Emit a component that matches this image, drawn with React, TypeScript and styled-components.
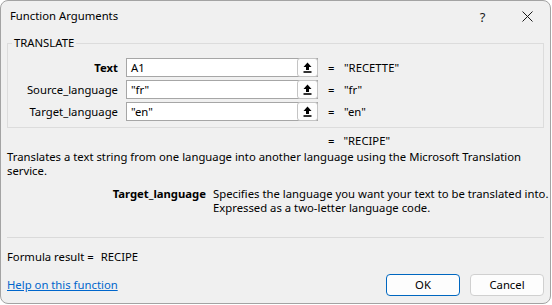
import React from "react";
import styled, { createGlobalStyle } from "styled-components";

const Global = createGlobalStyle`
  html, body { margin: 0; padding: 0; background: #ffffff; }
  body { font-family: "Noto Sans", "Segoe UI", sans-serif; font-size: 11.3px; color: #000; }
  * { box-sizing: border-box; }
`;

const Window = styled.div`
  width: 551px;
  height: 304px;
  background: #f0f0f0;
  border: 1px solid #a3a3a3;
  border-radius: 8px;
  display: flex;
  flex-direction: column;
  overflow: hidden;
`;

const TitleBar = styled.div`
  height: 31px;
  flex: none;
  display: flex;
  align-items: center;
  padding-left: 9px;
`;

const Title = styled.div`
  flex: 1;
  line-height: 16px;
  margin-top: -1px;
`;

const CaptionButton = styled.div`
  width: 45px;
  height: 31px;
  display: flex;
  align-items: center;
  justify-content: center;
  font-size: 13px;
  color: #1a1a1a;
`;

const Body = styled.div`
  flex: 1;
  display: flex;
  flex-direction: column;
  padding: 0 6px;
`;

const GroupBox = styled.fieldset`
  margin: 3px 0 0 0;
  padding: 7px 0 6px 0;
  border: 1px solid #dcdcdc;
  border-radius: 0;
  min-width: 0;
`;

const Legend = styled.legend`
  margin-left: 4px;
  padding: 0 2px;
  line-height: 16px;
`;

const ArgGrid = styled.div`
  display: grid;
  grid-template-columns: 110px 192px 10px 1fr;
  column-gap: 8px;
  row-gap: 3px;
  align-items: center;
`;

const ArgLabel = styled.div<{ $bold?: boolean }>`
  text-align: right;
  font-weight: ${(p) => (p.$bold ? 700 : 400)};
  line-height: 16px;
  white-space: nowrap;
`;

const Field = styled.div`
  height: 19px;
  background: #ffffff;
  border: 1px solid #a6a6a6;
  display: flex;
  align-items: center;
`;

const FieldText = styled.div`
  flex: 1;
  padding-left: 4px;
  line-height: 16px;
  white-space: nowrap;
  overflow: hidden;
`;

const RefButton = styled.div`
  width: 21px;
  height: 19px;
  margin: -1px -1px -1px 0;
  border: 1px solid #c4c4c4;
  border-radius: 3px;
  background: #fdfdfd;
  display: flex;
  align-items: center;
  justify-content: center;
`;

const Eq = styled.div`
  line-height: 16px;
  padding-left: 2px;
`;

const Value = styled.div`
  line-height: 16px;
  white-space: nowrap;
`;

const ResultRow = styled.div`
  margin-top: 5px;
  padding-left: 321px;
  display: flex;
  gap: 9px;
  line-height: 16px;
`;

const Description = styled.div`
  margin-top: 1px;
  line-height: 14px;
  white-space: nowrap;
`;

const ArgHelp = styled.div`
  margin-top: 9px;
  display: grid;
  grid-template-columns: 199px 1fr;
  column-gap: 7px;
  line-height: 14px;
  white-space: nowrap;
`;

const ArgHelpName = styled.div`
  text-align: right;
  font-weight: 700;
`;

const Separator = styled.div`
  margin-top: 22px;
  height: 1px;
  background: #dadada;
`;

const FormulaResult = styled.div`
  margin-top: 11px;
  line-height: 16px;
  display: flex;
  gap: 7px;
`;

const Footer = styled.div`
  margin-top: 9px;
  display: flex;
  align-items: center;
  gap: 10px;
`;

const HelpLink = styled.a`
  flex: 1;
  color: #0066cc;
  text-decoration: underline;
  line-height: 16px;
`;

const DialogButton = styled.div<{ $default?: boolean }>`
  width: 74px;
  height: 22px;
  border: 1px solid ${(p) => (p.$default ? "#0067c0" : "#d0d0d0")};
  border-radius: 4px;
  background: #fdfdfd;
  display: flex;
  align-items: center;
  justify-content: center;
  line-height: 16px;
`;

const RefIcon = () => (
  <svg width="9" height="11" viewBox="0 0 9 11">
    <path d="M4.5 0.5 L8.5 5 H6 V8 H3 V5 H0.5 Z" fill="#000" />
    <rect x="0.5" y="9.2" width="8" height="1.6" fill="#000" />
  </svg>
);

const CloseIcon = () => (
  <svg width="11" height="11" viewBox="0 0 11 11">
    <path d="M0.5 0.5 L10.5 10.5 M10.5 0.5 L0.5 10.5" stroke="#1a1a1a" strokeWidth="1" fill="none" />
  </svg>
);

const args = [
  { label: "Text", bold: true, input: "A1", value: '"RECETTE"' },
  { label: "Source_language", bold: false, input: '"fr"', value: '"fr"' },
  { label: "Target_language", bold: false, input: '"en"', value: '"en"' },
];

export default function App() {
  return (
    <>
      <Global />
      <Window>
        <TitleBar>
          <Title>Function Arguments</Title>
          <CaptionButton>?</CaptionButton>
          <CaptionButton>
            <CloseIcon />
          </CaptionButton>
        </TitleBar>
        <Body>
          <GroupBox>
            <Legend>TRANSLATE</Legend>
            <ArgGrid>
              {args.map((a) => (
                <React.Fragment key={a.label}>
                  <ArgLabel $bold={a.bold}>{a.label}</ArgLabel>
                  <Field>
                    <FieldText>{a.input}</FieldText>
                    <RefButton>
                      <RefIcon />
                    </RefButton>
                  </Field>
                  <Eq>=</Eq>
                  <Value>{a.value}</Value>
                </React.Fragment>
              ))}
            </ArgGrid>
          </GroupBox>
          <ResultRow>
            <span>=</span>
            <span>"RECIPE"</span>
          </ResultRow>
          <Description>
            Translates a text string from one language into another language using the Microsoft Translation
            <br />
            service.
          </Description>
          <ArgHelp>
            <ArgHelpName>Target_language</ArgHelpName>
            <div>
              Specifies the language you want your text to be translated into.
              <br />
              Expressed as a two-letter language code.
            </div>
          </ArgHelp>
          <Separator />
          <FormulaResult>
            <span>Formula result =</span>
            <span>RECIPE</span>
          </FormulaResult>
          <Footer>
            <HelpLink href="#">Help on this function</HelpLink>
            <DialogButton $default>OK</DialogButton>
            <DialogButton>Cancel</DialogButton>
          </Footer>
        </Body>
      </Window>
    </>
  );
}
